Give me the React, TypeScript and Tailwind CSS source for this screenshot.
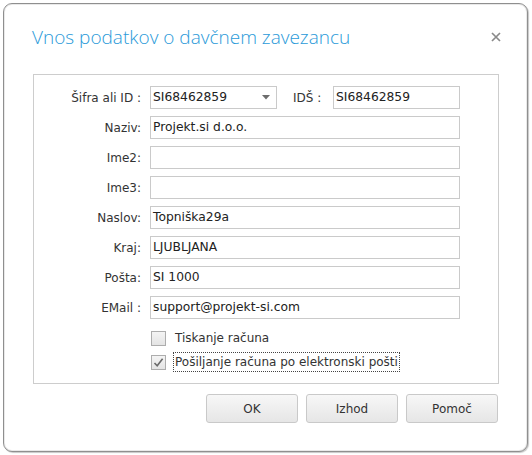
import React from "react";

const font = { fontFamily: '"DejaVu Sans", "Liberation Sans", sans-serif' };

function Row({ label, children }: { label: string; children: React.ReactNode }) {
  return (
    <div className="flex items-center h-[23px]">
      <div className="w-[107px] text-right text-[12px] text-[#333] whitespace-nowrap">{label}</div>
      <div className="ml-[9px] flex items-center">{children}</div>
    </div>
  );
}

function Input({ value = "", w = 310 }: { value?: string; w?: number }) {
  return (
    <div
      className="h-[23px] border border-[#cacaca] bg-white flex items-center pl-[2px] text-[12.3px] text-[#222] whitespace-nowrap overflow-hidden"
      style={{ width: w }}
    >
      {value}
    </div>
  );
}

function Check({ checked, label, focus }: { checked?: boolean; label: string; focus?: boolean }) {
  return (
    <div className="flex items-center h-[20px]">
      <div className="w-[15px] h-[15px] border border-[#adadad] bg-gradient-to-b from-[#f4f4f4] to-[#e4e4e4] flex items-center justify-center">
        {checked && (
          <svg width="11" height="11" viewBox="0 0 11 11">
            <path d="M1.5 6 L4.2 8.8 L9.6 1.8" stroke="#6a6a6a" strokeWidth="1.6" fill="none" />
          </svg>
        )}
      </div>
      <div
        className={
          "ml-[7px] px-[1px] h-[20px] flex items-center text-[12px] text-[#333] whitespace-nowrap " +
          (focus ? "border border-dotted border-[#444]" : "border border-transparent")
        }
      >
        {label}
      </div>
    </div>
  );
}

function Btn({ label }: { label: string }) {
  return (
    <div className="w-[92px] h-[29px] rounded-[3px] border border-[#c9c9c9] bg-gradient-to-b from-[#f7f7f7] to-[#e6e6e6] flex items-center justify-center text-[12px] text-[#333]">
      {label}
    </div>
  );
}

export default function App() {
  return (
    <div className="w-[532px] h-[455px] bg-white pt-[3px] pl-[3px]" style={font}>
      <div className="w-[525px] h-[449px] border border-[#8f8f8f] rounded-[9px] shadow-[inset_0_0_0_1px_#e9e9e9,1px_1px_1px_#c8c8c8] bg-white flex flex-col">
        <div className="h-[70px] flex items-start justify-between pl-[28px] pr-[26px] pt-[21px]">
          <div
            className="text-[19px] leading-[24px] text-[#2a9ad9] font-light whitespace-nowrap"
            style={{ fontFamily: '"Open Sans", "DejaVu Sans", sans-serif' }}
          >
            Vnos podatkov o davčnem zavezancu
          </div>
          <svg width="10" height="10" viewBox="0 0 10 10" className="mt-[7px]">
            <path d="M1 1 L9 9 M9 1 L1 9" stroke="#8a8a8a" strokeWidth="1.7" />
          </svg>
        </div>
        <div className="ml-[29px] w-[466px] h-[310px] border border-[#cdcdcd] pt-[11px] flex flex-col gap-[7px]">
          <Row label="Šifra ali ID :">
            <div className="w-[127px] h-[23px] border border-[#cacaca] bg-white flex items-center justify-between pl-[2px] pr-[6px] text-[12.3px] text-[#222]">
              <span>SI68462859</span>
              <svg width="8" height="5" viewBox="0 0 8 5">
                <path d="M0 0 L8 0 L4 4.5 Z" fill="#6d6d6d" />
              </svg>
            </div>
            <div className="ml-[16px] w-[40px] text-[12px] text-[#333] whitespace-nowrap">IDŠ :</div>
            <Input value="SI68462859" w={127} />
          </Row>
          <Row label="Naziv:">
            <Input value="Projekt.si d.o.o." />
          </Row>
          <Row label="Ime2:">
            <Input />
          </Row>
          <Row label="Ime3:">
            <Input />
          </Row>
          <Row label="Naslov:">
            <Input value="Topniška29a" />
          </Row>
          <Row label="Kraj:">
            <Input value="LJUBLJANA" />
          </Row>
          <Row label="Pošta:">
            <Input value="SI 1000" />
          </Row>
          <Row label="EMail :">
            <Input value="support@projekt-si.com" />
          </Row>
          <div className="ml-[117px] mt-[2px] flex flex-col gap-[4px]">
            <Check label="Tiskanje računa" />
            <Check label="Pošiljanje računa po elektronski pošti" checked focus />
          </div>
        </div>
        <div className="mt-[10px] ml-[202px] flex gap-[8px]">
          <Btn label="OK" />
          <Btn label="Izhod" />
          <Btn label="Pomoč" />
        </div>
      </div>
    </div>
  );
}
